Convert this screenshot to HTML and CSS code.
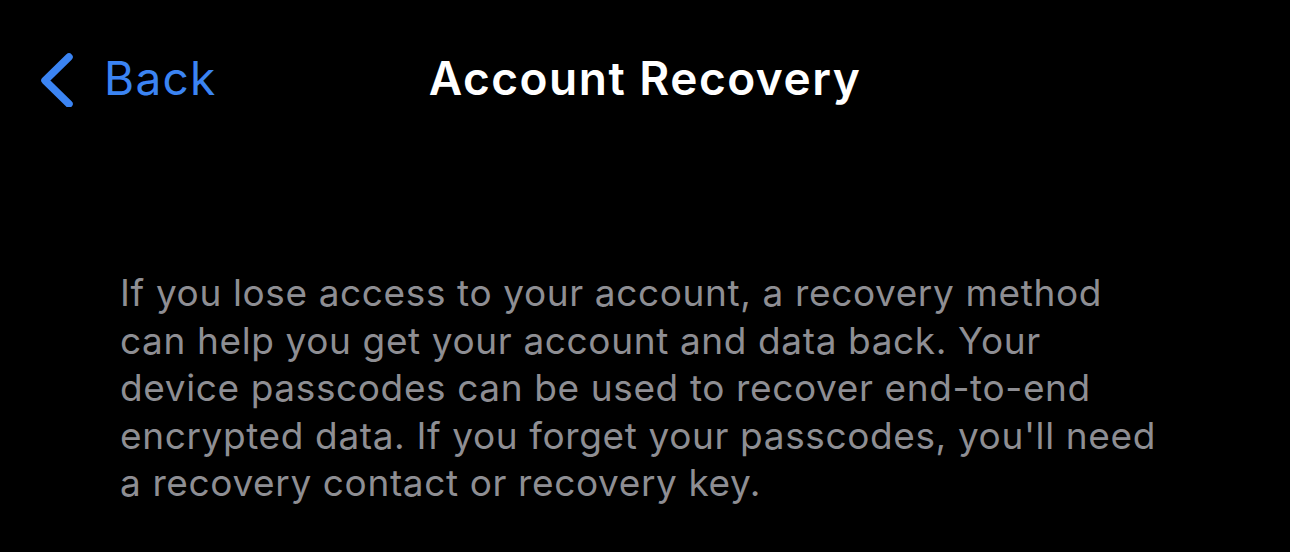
FILE: index.html
```html
<!DOCTYPE html>
<html lang="en">
<head>
<meta charset="utf-8">
<title>Account Recovery</title>
<link rel="stylesheet" href="styles.css">
</head>
<body>
<div class="screen">
  <header class="nav">
    <a class="back" href="#">
      <svg class="chevron" width="36" height="56" viewBox="0 0 36 56" aria-hidden="true">
        <path d="M31 6 L7 29.5 L31 53" fill="none" stroke="currentColor" stroke-width="7.5" stroke-linecap="round" stroke-linejoin="round"/>
      </svg>
      <span class="back-label">Back</span>
    </a>
    <h1 class="title">Account Recovery</h1>
    <div class="spacer"></div>
  </header>
  <main class="content">
    <p class="desc">If you lose access to your account, a recovery method can help you get your account and data back. Your device passcodes can be used to recover end-to-end encrypted data. If you forget your passcodes, you'll need a recovery contact or recovery key.</p>
  </main>
</div>
</body>
</html>
```

FILE: styles.css
```css
html, body {
  margin: 0;
  padding: 0;
  background: #000;
}

.screen {
  width: 1290px;
  height: 552px;
  overflow: hidden;
  background: #000;
  font-family: Inter, "Noto Sans", "Liberation Sans", sans-serif;
}

.nav {
  display: grid;
  grid-template-columns: 1fr auto 1fr;
  align-items: center;
  padding-top: 49px;
  height: 56px;
}

.back {
  display: flex;
  align-items: center;
  gap: 30px;
  padding-left: 38px;
  color: #3b84f3;
  text-decoration: none;
}

.chevron {
  display: block;
  margin-top: 2px;
}

.back-label {
  font-size: 46px;
  line-height: 56px;
  font-weight: 400;
  letter-spacing: 1.3px;
}

.title {
  margin: 0;
  color: #fff;
  font-size: 46px;
  line-height: 56px;
  font-weight: 600;
  letter-spacing: 1.5px;
}

.content {
  padding: 164px 126px 0 120px;
}

.desc {
  margin: 0;
  color: #8e8e93;
  font-size: 37px;
  line-height: 47.5px;
  font-weight: 400;
  letter-spacing: 0.62px;
}
```
